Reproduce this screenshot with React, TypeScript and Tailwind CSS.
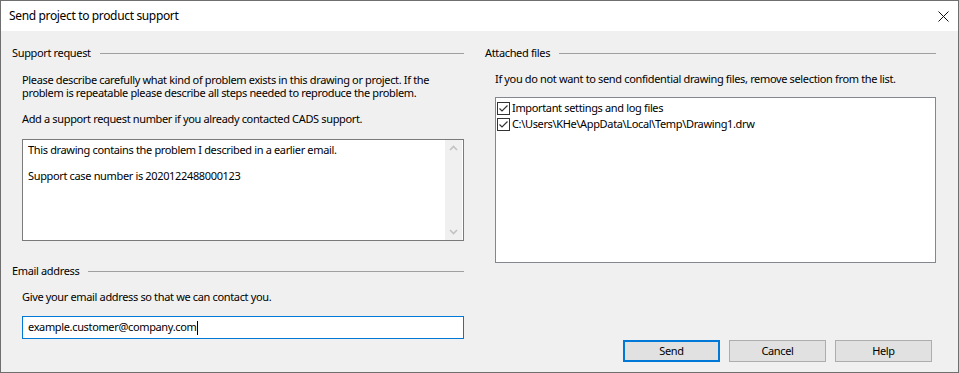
import React from 'react'

const font = { fontFamily: '"Segoe UI", "Noto Sans", sans-serif' }

function GroupHeader({ label }: { label: string }) {
  return (
    <div className="flex items-center h-[16px]">
      <span className="whitespace-nowrap">{label}</span>
      <div className="flex-1 h-px bg-[#a0a0a0] ml-[9px]" />
    </div>
  )
}

function Check() {
  return (
    <span className="w-[13px] h-[13px] border border-[#333333] bg-white flex items-center justify-center shrink-0">
      <svg width="11" height="11" viewBox="0 0 11 11">
        <path d="M1.5 5.5 L4 8 L9.5 2.5" fill="none" stroke="#333333" strokeWidth="1.2" />
      </svg>
    </span>
  )
}

function Chevron({ up }: { up?: boolean }) {
  return (
    <svg width="9" height="6" viewBox="0 0 9 6">
      <path d={up ? 'M1 5 L4.5 1.5 L8 5' : 'M1 1 L4.5 4.5 L8 1'} fill="none" stroke="#c2c2c2" strokeWidth="1.6" />
    </svg>
  )
}

export default function App() {
  return (
    <div className="w-[959px] h-[373px] bg-[#f0f0f0] border border-[#6f6f6f] flex flex-col text-[11px] tracking-[-0.35px] text-black" style={font}>
      {/* Title bar */}
      <div className="h-[30px] bg-white flex items-center justify-between pl-[8px] pr-[9px] shrink-0">
        <span className="text-[12px]">Send project to product support</span>
        <svg width="11" height="11" viewBox="0 0 11 11">
          <path d="M0.5 0.5 L10.5 10.5 M10.5 0.5 L0.5 10.5" stroke="#111" strokeWidth="1" />
        </svg>
      </div>

      <div className="flex flex-1 pl-[11px] pr-[22px] pt-[14px]">
        {/* Left column */}
        <div className="w-[452px] flex flex-col">
          <GroupHeader label="Support request" />
          <div className="pl-[10px] mt-[12px] leading-[13px]">
            <p>Please describe carefully what kind of problem exists in this drawing or project. If the</p>
            <p>problem is repeatable please describe all steps needed to reproduce the problem.</p>
            <p className="mt-[13px]">Add a support request number if you already contacted CADS support.</p>
          </div>
          <div className="ml-[10px] mt-[14px] h-[102px] border border-[#7a7a7a] bg-white flex">
            <div className="flex-1 pl-[5px] pt-[3px] leading-[13px]">
              <p>This drawing contains the problem I described in a earlier email.</p>
              <p className="mt-[13px]">Support case number is 2020122488000123</p>
            </div>
            <div className="w-[17px] mr-px bg-[#f0f0f0] flex flex-col items-center justify-between py-[5px]">
              <Chevron up />
              <Chevron />
            </div>
          </div>

          <div className="mt-[22px]">
            <GroupHeader label="Email address" />
          </div>
          <p className="pl-[10px] mt-[11px] leading-[13px]">Give your email address so that we can contact you.</p>
          <div className="ml-[10px] mt-[13px] h-[23px] border border-[#0078d7] bg-white flex items-center pl-[5px]">
            <span>example.customer@company.com</span>
            <span className="w-px h-[14px] bg-black ml-px" />
          </div>
        </div>

        {/* Right column */}
        <div className="flex-1 ml-[21px] flex flex-col">
          <GroupHeader label="Attached files" />
          <p className="pl-[10px] mt-[11px] leading-[13px]">If you do not want to send confidential drawing files, remove selection from the list.</p>
          <div className="ml-[10px] mt-[12px] h-[166px] border border-[#828790] bg-white pt-[2px] pl-px">
            <div className="flex items-center h-[16px] gap-[2px]">
              <Check />
              <span>Important settings and log files</span>
            </div>
            <div className="flex items-center h-[16px] gap-[2px]">
              <Check />
              <span>C:\Users\KHe\AppData\Local\Temp\Drawing1.drw</span>
            </div>
          </div>
          <div className="flex justify-end gap-[9px] mt-[77px] mr-[4px]">
            <button className="w-[97px] h-[22px] border-2 border-[#0078d7] bg-[#e1e1e1]">Send</button>
            <button className="w-[97px] h-[22px] border border-[#adadad] bg-[#e1e1e1]">Cancel</button>
            <button className="w-[97px] h-[22px] border border-[#adadad] bg-[#e1e1e1]">Help</button>
          </div>
        </div>
      </div>
    </div>
  )
}
